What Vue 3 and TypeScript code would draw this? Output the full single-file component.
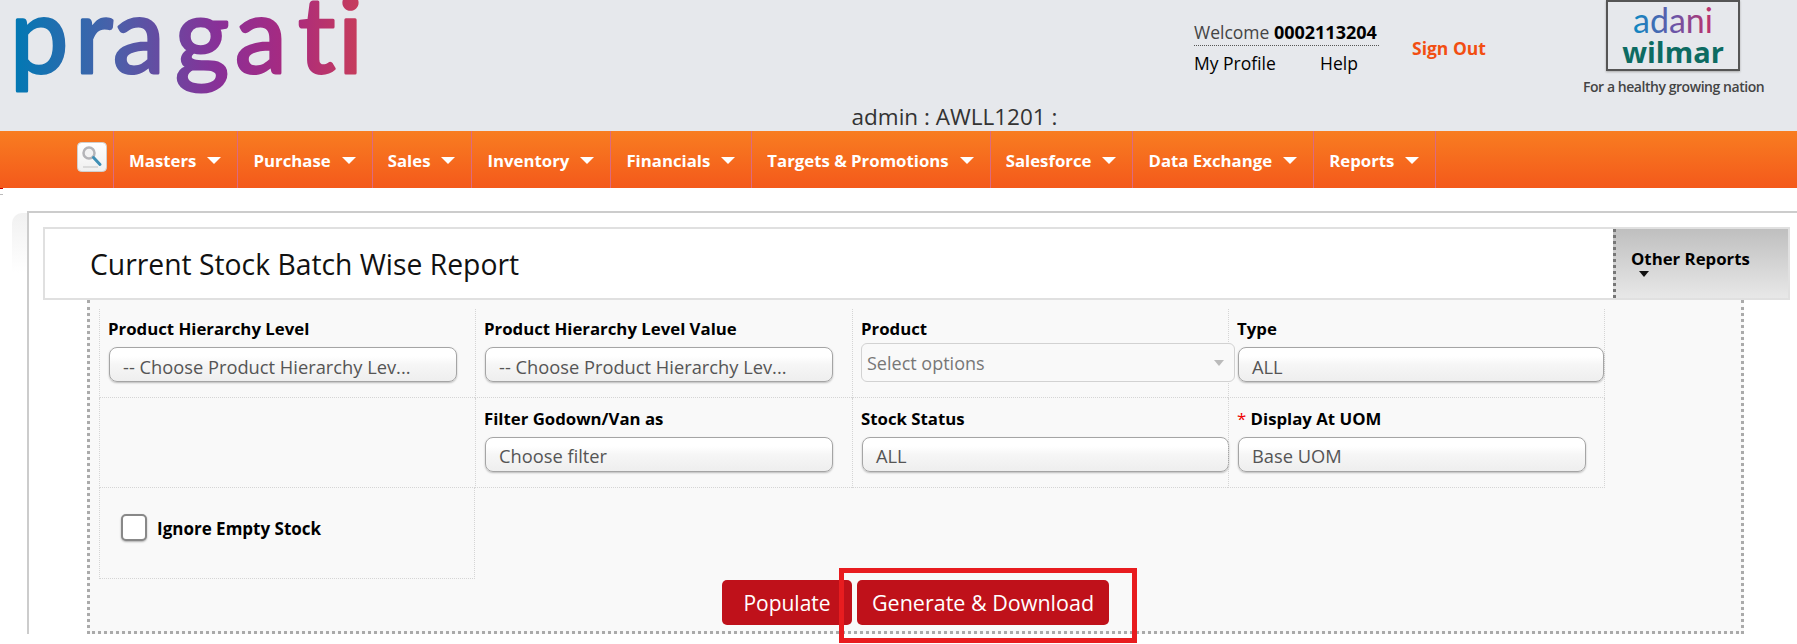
<template>
  <div class="page">
    <header class="top">
      <div class="top-row">
        <svg class="logo" width="370" height="105" viewBox="0 0 370 105">
          <defs>
            <linearGradient id="pragatiGrad" gradientUnits="userSpaceOnUse" x1="13" y1="0" x2="358" y2="0">
              <stop offset="0" stop-color="#0079b4" />
              <stop offset="0.3" stop-color="#4c5fa9" />
              <stop offset="0.6" stop-color="#8a2f97" />
              <stop offset="0.8" stop-color="#a92a7f" />
              <stop offset="1" stop-color="#c63c5c" />
            </linearGradient>
          </defs>
          <text x="10 75 113 175 235 298 338" y="73" class="logo-text">pragati</text>
        </svg>
        <div class="user-box">
          <div class="welcome">Welcome <b>0002113204</b></div>
          <div class="user-links">
            <span class="profile">My Profile</span>
            <span>Help</span>
          </div>
        </div>
        <div class="sign-out">Sign Out</div>
        <div class="brand">
          <div class="brand-box">
            <svg width="130" height="35" viewBox="0 0 130 35">
              <defs>
                <linearGradient id="adaniGrad" gradientUnits="userSpaceOnUse" x1="26" y1="0" x2="106" y2="0">
                  <stop offset="0" stop-color="#0f88c2" />
                  <stop offset="0.5" stop-color="#6a55a8" />
                  <stop offset="1" stop-color="#c42f66" />
                </linearGradient>
              </defs>
              <text x="65" y="31" text-anchor="middle" class="adani-text">adani</text>
            </svg>
            <div class="wilmar">wilmar</div>
          </div>
          <div class="tagline">For a healthy growing nation</div>
        </div>
      </div>
      <div class="admin-row">admin : AWLL1201 :</div>
    </header>

    <nav class="menu">
      <div class="search-btn">
        <svg width="30" height="30" viewBox="0 0 30 30">
          <defs>
            <linearGradient id="searchBg" x1="0" y1="0" x2="0" y2="1">
              <stop offset="0" stop-color="#fff" />
              <stop offset="1" stop-color="#efefef" />
            </linearGradient>
          </defs>
          <rect x="0.5" y="0.5" width="29" height="29" rx="4" fill="url(#searchBg)" stroke="#cfcfcf" />
          <circle cx="12" cy="11" r="5.5" fill="#f2f2f3" stroke="#b4b4b8" stroke-width="2.5" />
          <path d="M16.5 15.5 L23 22.5" stroke="#3f8fb5" stroke-width="3" stroke-linecap="round" />
          <path d="M6 25 H21" stroke="#d2d2d2" stroke-width="1.5" />
        </svg>
      </div>
      <div v-for="item in menuItems" :key="item" class="menu-item">
        {{ item }}<span class="caret"></span>
      </div>
    </nav>
    <div class="edge-mark"></div>

    <main class="content">
      <div class="panel">
        <div class="title-bar">
          <h1>Current Stock Batch Wise Report</h1>
          <div class="other-reports">
            <span>Other Reports</span>
            <i class="dark-caret"></i>
          </div>
        </div>
        <section class="form-area">
          <div class="form-grid">
            <div class="cell">
              <label>Product Hierarchy Level</label>
              <div class="select-box">-- Choose Product Hierarchy Lev...</div>
            </div>
            <div class="cell">
              <label>Product Hierarchy Level Value</label>
              <div class="select-box">-- Choose Product Hierarchy Lev...</div>
            </div>
            <div class="cell">
              <label>Product</label>
              <div class="multi-box">
                Select options
                <i class="multi-caret"></i>
              </div>
            </div>
            <div class="cell">
              <label>Type</label>
              <div class="select-box wide">ALL</div>
            </div>

            <div class="cell row-two"></div>
            <div class="cell row-two">
              <label>Filter Godown/Van as</label>
              <div class="select-box">Choose filter</div>
            </div>
            <div class="cell row-two">
              <label>Stock Status</label>
              <div class="select-box status">ALL</div>
            </div>
            <div class="cell row-two">
              <label><em>*</em> Display At UOM</label>
              <div class="select-box">Base UOM</div>
            </div>

            <div class="cell check-cell">
              <span class="check"></span>
              <label>Ignore Empty Stock</label>
            </div>
          </div>
          <div class="actions">
            <button class="btn populate">Populate</button>
            <button class="btn generate">Generate &amp; Download</button>
            <div class="highlight"></div>
          </div>
        </section>
      </div>
    </main>
  </div>
</template>

<script setup lang="ts">
const menuItems: string[] = [
  'Masters',
  'Purchase',
  'Sales',
  'Inventory',
  'Financials',
  'Targets & Promotions',
  'Salesforce',
  'Data Exchange',
  'Reports'
]
</script>

<style>
html,
body {
  margin: 0;
  background: #fff;
}
</style>

<style scoped>
.page {
  width: 1797px;
  height: 644px;
  overflow: hidden;
  font-family: "Open Sans", "Liberation Sans", sans-serif;
  font-size: 16px;
  color: #000;
  background: #fff;
}

.top {
  height: 131px;
  background: #e6e8ec;
}
.top-row {
  display: flex;
  height: 105px;
}
.logo {
  flex: none;
  width: 370px;
}
.logo-text {
  font-family: Lato, sans-serif;
  font-size: 104px;
  fill: url(#pragatiGrad);
  stroke: url(#pragatiGrad);
  stroke-width: 3px;
  stroke-linejoin: round;
}
.user-box {
  margin-left: 824px;
  padding-top: 21px;
  width: 185px;
  flex: none;
  font-size: 17.5px;
}
.welcome {
  height: 24px;
  line-height: 22px;
  border-bottom: 1px dotted #555;
  color: #444;
  white-space: nowrap;
}
.welcome b {
  color: #000;
  font-size: 18px;
}
.user-links {
  display: flex;
  margin-top: 6px;
  line-height: 22px;
}
.profile {
  width: 126px;
}
.sign-out {
  flex: none;
  width: 75px;
  margin-left: 33px;
  padding-top: 37px;
  color: #f24e12;
  font-weight: 700;
  font-size: 17.5px;
  line-height: 22px;
  white-space: nowrap;
}
.brand {
  margin-left: 96px;
  width: 179px;
  flex: none;
}
.brand-box {
  width: 134px;
  height: 71px;
  box-sizing: border-box;
  margin-left: 23px;
  border: 2px solid #555;
  box-shadow: 0 1px 2px #aaa;
}
.brand-box svg {
  display: block;
}
.adani-text {
  font-family: Lato, sans-serif;
  font-size: 34px;
  fill: url(#adaniGrad);
}
.wilmar {
  margin-top: 0;
  text-align: center;
  font-family: "Open Sans", sans-serif;
  font-weight: 700;
  font-size: 29px;
  line-height: 30px;
  color: #0d6b62;
}
.tagline {
  margin-top: 8px;
  font-size: 14px;
  font-weight: 600;
  letter-spacing: -0.45px;
  line-height: 16px;
  color: #444;
  white-space: nowrap;
}
.admin-row {
  height: 26px;
  line-height: 24px;
  padding-left: 112px;
  text-align: center;
  font-size: 22.5px;
  color: #333;
}

.menu {
  display: flex;
  height: 57px;
  padding-left: 77px;
  background: linear-gradient(#f87d21, #f4591b);
}
.search-btn {
  width: 36px;
  padding-top: 11px;
}
.search-btn svg {
  display: block;
}
.menu-item {
  display: flex;
  align-items: center;
  padding: 1px 16px 0 15px;
  border-left: 1px solid #dc6a80;
  color: #fff;
  font-weight: 700;
  font-size: 16.8px;
  white-space: nowrap;
}
.menu-item:last-child {
  border-right: 1px solid #dc6a80;
}
.caret {
  margin-left: 11px;
  border-left: 7px solid transparent;
  border-right: 7px solid transparent;
  border-top: 7px solid #fff;
}
.edge-mark {
  width: 3px;
  height: 7px;
  border-top: 1px solid #c00;
  border-bottom: 1px solid #bbb;
  box-sizing: border-box;
}

.content {
  padding: 16px 0 0 12px;
}
.panel {
  position: relative;
  margin-left: 15px;
  padding: 14px 0 0 15px;
  height: 423px;
  box-sizing: border-box;
  border-top: 2px solid #ccc;
  border-left: 2px solid #ccc;
}
.panel::before {
  content: "";
  position: absolute;
  left: -17px;
  top: 0;
  width: 15px;
  height: 60px;
  border-radius: 10px 0 0 0;
  background: linear-gradient(#f1f1f1, #fff);
}
.title-bar {
  display: flex;
  justify-content: space-between;
  width: 1743px;
  height: 69px;
  border: 2px solid #e0e0e0;
  box-sizing: content-box;
  margin-left: -1px;
}
.title-bar h1 {
  margin: 0;
  padding-left: 45px;
  font-size: 28.3px;
  font-weight: 400;
  line-height: 70px;
  color: #111;
  white-space: nowrap;
}
.other-reports {
  width: 157px;
  padding: 19px 0 0 15px;
  border-left: 3px dotted #777;
  background: linear-gradient(#bfbfbf, #e8e8e8);
  font-weight: 700;
  font-size: 16.8px;
  line-height: 22px;
  box-sizing: content-box;
  height: 50px;
  white-space: nowrap;
}
.other-reports span {
  display: block;
}
.dark-caret {
  display: block;
  width: 0;
  margin: 1px 0 0 8px;
  border-left: 5px solid transparent;
  border-right: 5px solid transparent;
  border-top: 6px solid #111;
}

.form-area {
  width: 1657px;
  height: 334px;
  margin-left: 43px;
  padding-top: 9px;
  box-sizing: border-box;
  background: #f9f9f9;
  border-left: 3px dotted #aaa;
  border-right: 3px dotted #aaa;
  border-bottom: 3px dotted #aaa;
}
.form-grid {
  display: grid;
  grid-template-columns: 376px 377px 376px 377px;
  grid-template-rows: 89px 90px 91px;
  margin-left: 9px;
}
.cell {
  padding: 9px 0 0 8px;
  border-left: 1px dotted #d5d5d5;
  border-bottom: 1px dotted #d5d5d5;
  box-sizing: border-box;
}
.cell:nth-child(4n) {
  border-right: 1px dotted #d5d5d5;
}
.row-two {
  padding-top: 10px;
}
.cell label {
  display: block;
  font-weight: 700;
  font-size: 16.8px;
  line-height: 22px;
  white-space: nowrap;
}
.cell em {
  color: #e00;
  font-style: normal;
  font-weight: 400;
}
.select-box {
  width: 348px;
  height: 35px;
  margin: 7px 0 0 1px;
  padding: 8px 0 0 13px;
  box-sizing: border-box;
  border: 1px solid #a5a5a5;
  border-radius: 8px;
  background: linear-gradient(#fff 25%, #f6f6f6 50%, #eee);
  box-shadow: 0 1px 2px rgba(0, 0, 0, 0.25);
  font-size: 18.3px;
  line-height: 22px;
  color: #555;
  white-space: nowrap;
}
.row-two .select-box {
  padding-top: 7px;
}
.select-box.wide {
  width: 366px;
}
.select-box.status {
  width: 367px;
}
.multi-box {
  position: relative;
  width: 374px;
  height: 39px;
  margin: 3px 0 0 0;
  padding: 7px 0 0 5px;
  box-sizing: border-box;
  border: 1px solid #d2d2d2;
  border-radius: 6px;
  background: #f9f9f9;
  font-size: 18px;
  line-height: 24px;
  color: #777;
}
.multi-caret {
  position: absolute;
  right: 10px;
  top: 16px;
  border-left: 5px solid transparent;
  border-right: 5px solid transparent;
  border-top: 6px solid #bbb;
}
.check-cell {
  display: flex;
  align-items: flex-start;
  padding: 26px 0 0 21px;
  border-right: 1px dotted #d5d5d5;
}
.check-cell label {
  margin-left: 10px;
  padding-top: 4px;
  font-size: 17px;
}
.check {
  flex: none;
  width: 26px;
  height: 27px;
  box-sizing: border-box;
  border: 2px solid #888;
  border-radius: 5px;
  background: #fff;
  box-shadow: 0 1px 2px rgba(0, 0, 0, 0.3);
}

.actions {
  position: relative;
  display: flex;
  gap: 5px;
  margin: 1px 0 0 632px;
}
.btn {
  height: 45px;
  padding: 0;
  border: none;
  border-radius: 5px;
  background: #bf111a;
  color: #fff;
  font-family: inherit;
  font-size: 21px;
}
.populate {
  width: 130px;
}
.generate {
  width: 252px;
  font-size: 21.5px;
}
.highlight {
  position: absolute;
  left: 117px;
  top: -12px;
  width: 298px;
  height: 75px;
  box-sizing: border-box;
  border: 5px solid #e81c1f;
}
</style>
